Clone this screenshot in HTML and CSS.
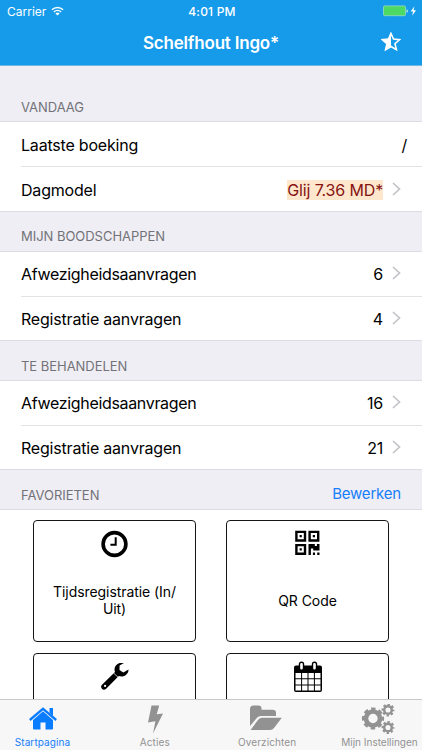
FILE: index.html
```html
<!DOCTYPE html>
<html lang="nl">
<head>
<meta charset="utf-8">
<title>Startpagina</title>
<link rel="stylesheet" href="styles.css">
</head>
<body>
<div class="phone">
  <header class="header">
    <div class="status">
      <div class="carrier"><span>Carrier</span>
        <svg class="wifi" viewBox="0 0 14 10"><path d="M1 3.7a8.500 8.500 0 0 1 12 0M3.100 6a5.500 5.500 0 0 1 7.800 0" fill="none" stroke="#fff" stroke-width="1.500"/><path d="M4.800 7.600a3.100 3.100 0 0 1 4.400 0L7 9.800z" fill="#fff"/></svg>
      </div>
      <span class="time">4:01 PM</span>
      <svg class="battery" viewBox="0 0 36 12"><rect x="2.500" y=".9" width="22" height="9.800" rx="1.200" fill="#4cd964" stroke="#9bdcc0" stroke-width=".8"/><path d="M25.500 4.200q1.500.4 1.500 1.800t-1.500 1.800z" fill="#b9e9df"/><path d="M33.400 1.200 29.700 6.600h2.400l-1 4.200 4-5.500h-2.500z" fill="#fff"/></svg>
    </div>
    <div class="navbar">
      <h1 class="title">Schelfhout Ingo*</h1>
      <svg class="star" viewBox="0 0 20 20"><path d="m10 1.500 2.500 5.600 6.100.6-4.600 4 1.400 6L10 14.500l-5.400 3.200 1.400-6-4.600-4 6.100-.6z" fill="none" stroke="#fff" stroke-width="1.600"/><path d="M10 0v15.300l-6 3.500 1.500-6.800L.3 7.400l6.800-.7z" fill="#fff"/></svg>
    </div>
  </header>
  <main class="content">
    <h2 class="section first">VANDAAG</h2>
    <div class="list today">
      <div class="row"><span class="label">Laatste boeking</span><span class="plain">/</span></div>
      <div class="row"><span class="label">Dagmodel</span><span class="value model">Glij 7.36 MD*</span><svg class="chevron" viewBox="0 0 9 14"><path d="m1 1 6.500 6L1 13"/></svg></div>
    </div>
    <h2 class="section messages">MIJN BOODSCHAPPEN</h2>
    <div class="list">
      <div class="row"><span class="label long">Afwezigheidsaanvragen</span><span class="value">6</span><svg class="chevron" viewBox="0 0 9 14"><path d="m1 1 6.500 6L1 13"/></svg></div>
      <div class="row"><span class="label">Registratie aanvragen</span><span class="value">4</span><svg class="chevron" viewBox="0 0 9 14"><path d="m1 1 6.500 6L1 13"/></svg></div>
    </div>
    <h2 class="section">TE BEHANDELEN</h2>
    <div class="list">
      <div class="row"><span class="label long">Afwezigheidsaanvragen</span><span class="value">16</span><svg class="chevron" viewBox="0 0 9 14"><path d="m1 1 6.500 6L1 13"/></svg></div>
      <div class="row"><span class="label">Registratie aanvragen</span><span class="value">21</span><svg class="chevron" viewBox="0 0 9 14"><path d="m1 1 6.500 6L1 13"/></svg></div>
    </div>
    <h2 class="section">FAVORIETEN <a class="edit">Bewerken</a></h2>
    <div class="cards">
      <div class="card">
        <svg class="icon" viewBox="0 0 30 30"><circle cx="14.500" cy="14" r="11.400" fill="none" stroke="#000" stroke-width="3.600"/><path d="M15.700 7.300v7.400h-5.300" fill="none" stroke="#000" stroke-width="2"/></svg>
        <p class="name">Tijdsregistratie (In/<br>Uit)</p>
      </div>
      <div class="card">
        <svg class="icon" viewBox="0 0 30 30"><g fill="none" stroke="#000" stroke-width="2.400"><path d="M3.400 1.900h8.600v8.600H3.400zM16.600 1.900h8.600v8.600h-8.600zM3.400 15.100H12v8.600H3.400z"/></g><path d="M6.600 5.100h2.200v2.200H6.600zM19.800 5.100H22v2.200h-2.200zM6.600 18.300h2.200v2.200H6.600zM15.500 13.900h6.300v2h2.100v-2h2.600v6.600h-6.300v-2.100h-2.300v6.500h-2.400zM19.900 22.500H22v2.400h-2.100zM24.200 22.500h2.300v2.400h-2.300z"/></svg>
        <p class="name single">QR Code</p>
      </div>
      <div class="card">
        <svg class="icon" viewBox="0 0 30 30"><path d="M23.900.1C17.500-1.700 12.900 4 15 9.100L2 21.700c-2.700 2.600 1.100 6.700 3.900 4.200L18.800 13c4.700 1.800 9.800-1.500 9.700-6.400l-5.200 2.800-3.800-2.500.1-4.300zM5.100 21.800a1.100 1.100 0 1 1 0 2.200 1.100 1.100 0 0 1 0-2.200z" fill-rule="evenodd"/><path d="m13.300 9.800 5.100 4.700" stroke="#fff" stroke-width=".7"/></svg>
      </div>
      <div class="card">
        <svg class="icon calendar" viewBox="0 0 30 32"><path d="M3 4.500h24a2 2 0 0 1 2 2V29a2 2 0 0 1-2 2H3a2 2 0 0 1-2-2V6.500a2 2 0 0 1 2-2z"/><path fill="#fff" d="M2.500 12h5.600v5.300H2.500zM9.100 12h5.400v5.300H9.100zM15.500 12h5.400v5.300h-5.400zM21.900 12h5.600v5.300h-5.600zM2.500 18.300h5.600v5.300H2.500zM9.100 18.300h5.400v5.300H9.100zM15.500 18.300h5.400v5.300h-5.400zM21.900 18.300h5.600v5.300h-5.600zM2.500 24.600h5.600v4.900H2.500zM9.100 24.600h5.400v4.900H9.100zM15.500 24.600h5.400v4.900h-5.400zM21.900 24.600h5.600v4.900h-5.600z"/><g fill="#fff" stroke="#000" stroke-width="1.400"><rect x="6.500" y="1.200" width="4" height="8" rx="1.900"/><rect x="19.500" y="1.200" width="4" height="8" rx="1.900"/></g></svg>
      </div>
    </div>
  </main>
  <nav class="tabs">
    <div class="tab active"><svg viewBox="0 0 34 32"><path d="M17 6.500 27 15v9.600q0 1-1 1h-6.500v-7h-5v7H8q-1 0-1-1V15z"/><path d="M3.800 16.200 17 4.900l13.200 11.300" fill="none" stroke="#f7f7f8" stroke-width="3.800"/><path d="M3.800 16 17 4.800 30.200 16" fill="none" stroke="#0a7cff" stroke-width="2.300"/><path d="M23.500 4H27v8l-3.500-3.200z"/></svg><span>Startpagina</span></div>
    <div class="tab"><svg viewBox="0 0 34 32"><path d="M13.500 1.500h7.700l-2.500 8.800 6.300-.9L15 29.500l2.400-12.300-7.400 1.400z"/></svg><span>Acties</span></div>
    <div class="tab folder"><svg viewBox="0 0 34 32"><path d="M1 22V5q0-3.500 3.500-3.500h5q3 0 3 3v1.200h11q3.500 0 3.500 3.300v3H12q-2.500 0-4 1.800z"/><path d="m1.900 25.500 7.300-9.800q1.500-2 4-2h19.600L25 24q-1.500 2-3.700 2H2q-.6 0-.1-.5z"/></svg><span>Overzichten</span></div>
    <div class="tab gears"><svg viewBox="0 0 34 32"><g fill="none" stroke="#929292"><circle cx="12" cy="14.500" r="7" stroke-width="4.600"/><circle cx="12" cy="14.500" r="9.700" stroke-width="2.800" stroke-dasharray="4.400 3.218" stroke-dashoffset="2.200"/><circle cx="27" cy="6" r="3.800" stroke-width="2.500"/><circle cx="27" cy="6" r="5.500" stroke-width="2" stroke-dasharray="2.400 1.920" stroke-dashoffset="1.200"/><circle cx="27" cy="23.500" r="3.800" stroke-width="2.500"/><circle cx="27" cy="23.500" r="5.500" stroke-width="2" stroke-dasharray="2.400 1.920" stroke-dashoffset="1.200"/></g></svg><span>Mijn Instellingen</span></div>
  </nav>
</div>
</body>
</html>
```
FILE: styles.css
```css
* { box-sizing: border-box; }
body { margin: 0; font-family: Inter, "Liberation Sans", sans-serif; color: #000; }
svg { display: block; flex: none; }
h1, h2, p { margin: 0; font-weight: 400; }
.phone { width: 422px; height: 750px; overflow: hidden; display: flex; flex-direction: column; background: #fff; }
.header { height: 66px; flex: none; background: #169bea; border-bottom: 1px solid #6eb8e8; color: #fff; }
.status { height: 22px; display: grid; grid-template-columns: 1fr auto 1fr; align-items: center; padding: 0 5px 0 7px; font-size: 12px; }
.carrier { display: flex; align-items: center; gap: 5px; }
.wifi { width: 13px; height: 10px; }
.time { font-weight: 500; letter-spacing: .2px; }
.battery { width: 36px; height: 12px; justify-self: end; }
.navbar { height: 42px; display: grid; grid-template-columns: 1fr auto 1fr; align-items: center; padding: 0 21px; }
.title { grid-column: 2; font-size: 17px; font-weight: 600; line-height: 20px; letter-spacing: -.2px; }
.star { width: 20px; height: 20px; justify-self: end; margin-top: -2px; }
.content { flex: 1; min-height: 0; overflow: hidden; }
.section { height: 39px; display: flex; justify-content: space-between; align-items: center; padding: 10px 21px 0; background: #efeef5; color: #727277; font-size: 13px; line-height: 18px; letter-spacing: -.03px; }
.section.first { height: 55px; padding-top: 27px; }
.section.messages { padding-top: 9px; }
.edit { color: #167efb; font-size: 15px; letter-spacing: -.2px; margin-top: -2px; }
.list { height: 90px; background: #fff; border-top: 1px solid #dddce2; border-bottom: 1px solid #dddce2; padding-left: 21px; }
.today { height: 91px; }
.row { height: 44px; display: flex; align-items: center; padding-right: 21px; font-size: 16px; line-height: 20px; letter-spacing: -.2px; }
.row + .row { border-top: 1px solid #e3e3e5; }
.today .row { padding-top: 2px; }
.label { flex: 1; }
.long { letter-spacing: -.33px; }
.plain { margin-right: -6px; }
.model { background: #fee7cc; color: #861313; letter-spacing: -.15px; }
.chevron { width: 9px; height: 14px; margin: -2px 0 0 9px; }
.chevron path { fill: none; stroke: #c3c3c8; stroke-width: 1.700; }
.cards { display: grid; grid-template-columns: 163px 163px; grid-auto-rows: 122px; gap: 11px 30px; padding: 10px 33px; border-top: 1px solid #dddce2; }
.card { border: 1.500px solid #151515; border-radius: 4px; display: flex; flex-direction: column; align-items: center; padding-top: 9px; }
.icon { width: 30px; height: 30px; }
.calendar { height: 32px; margin-top: -2px; }
.name { margin-top: 23px; font-size: 14px; line-height: 17px; text-align: center; letter-spacing: -.07px; }
.single { margin-top: 32px; }
.tabs { height: 51px; flex: none; display: flex; justify-content: space-between; padding: 0 4px; background: #f7f7f8; border-top: 1px solid #c8c8c9; color: #929292; fill: #929292; }
.tab { width: 77px; display: flex; flex-direction: column; align-items: center; padding-top: 4px; font-size: 10px; line-height: 12px; white-space: nowrap; }
.tab svg { width: 34px; height: 32px; }
.folder svg { margin-right: 3px; }
.gears svg { margin-right: 3px; }
.tab span { letter-spacing: .1px; }
.gears span { letter-spacing: 0; }
.active { color: #167efb; fill: #0a7cff; }
```
